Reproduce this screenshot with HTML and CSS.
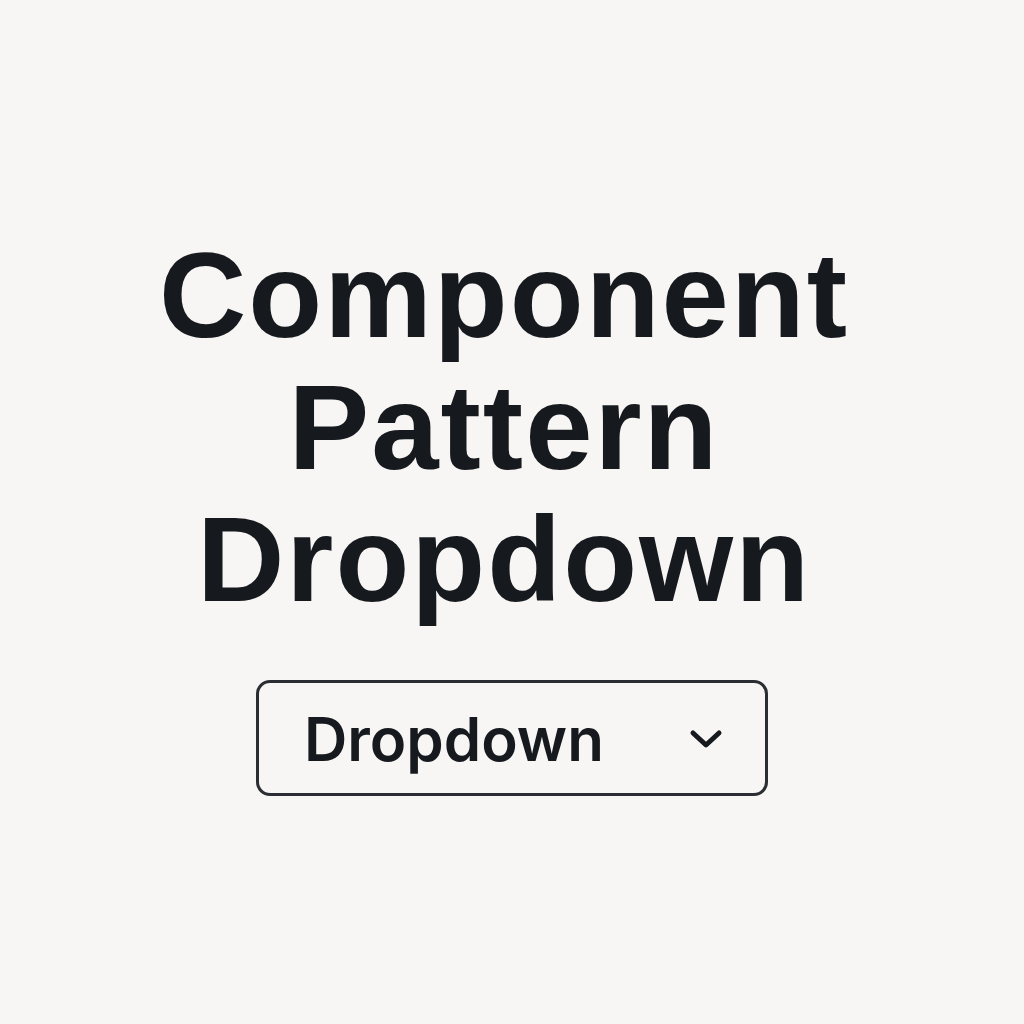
FILE: index.html
```html
<!DOCTYPE html>
<html lang="en">
<head>
    <meta charset="UTF-8">
    <meta name="viewport" content="width=device-width, initial-scale=1.0">
    <title>Component Pattern Dropdown</title>
    <link rel="stylesheet" href="styles.css">
</head>
<body>

<main class="page">
    <h1 class="title">Component<br>Pattern<br>Dropdown</h1>

    <button type="button" class="dropdown">
        <span class="dropdown-label">Dropdown</span>
        <svg class="chevron" width="34" height="20" viewBox="0 0 34 20" aria-hidden="true">
            <path d="M4 4 L17 16 L30 4" fill="none" stroke="currentColor" stroke-width="5" stroke-linecap="round" stroke-linejoin="round"/>
        </svg>
    </button>
</main>

</body>
</html>
```

FILE: styles.css
```css
body {
    margin: 0;
    padding: 0;
    background-color: #f7f6f4;
    color: #16191d;
    font-family: 'Liberation Sans', Arial, sans-serif;
}
.page {
    min-height: 100vh;
    display: flex;
    flex-direction: column;
    align-items: center;
    justify-content: center;
    gap: 55px;
}
.title {
    margin: 0 16px 0 0;
    font-size: 121px;
    font-weight: bold;
    line-height: 132px;
    letter-spacing: 2px;
    text-align: center;
}
.dropdown {
    width: 512px;
    height: 116px;
    box-sizing: border-box;
    display: flex;
    align-items: center;
    justify-content: space-between;
    padding: 0 42px 0 45px;
    background-color: transparent;
    border: 3px solid #2a2d31;
    border-radius: 14px;
    color: #16191d;
    font-family: 'Inter', 'Liberation Sans', sans-serif;
    font-size: 60px;
    font-weight: 600;
    cursor: pointer;
}
.dropdown-label {
    line-height: 1;
    padding-top: 2px;
}
.chevron {
    display: block;
    margin-top: 2px;
}
```
